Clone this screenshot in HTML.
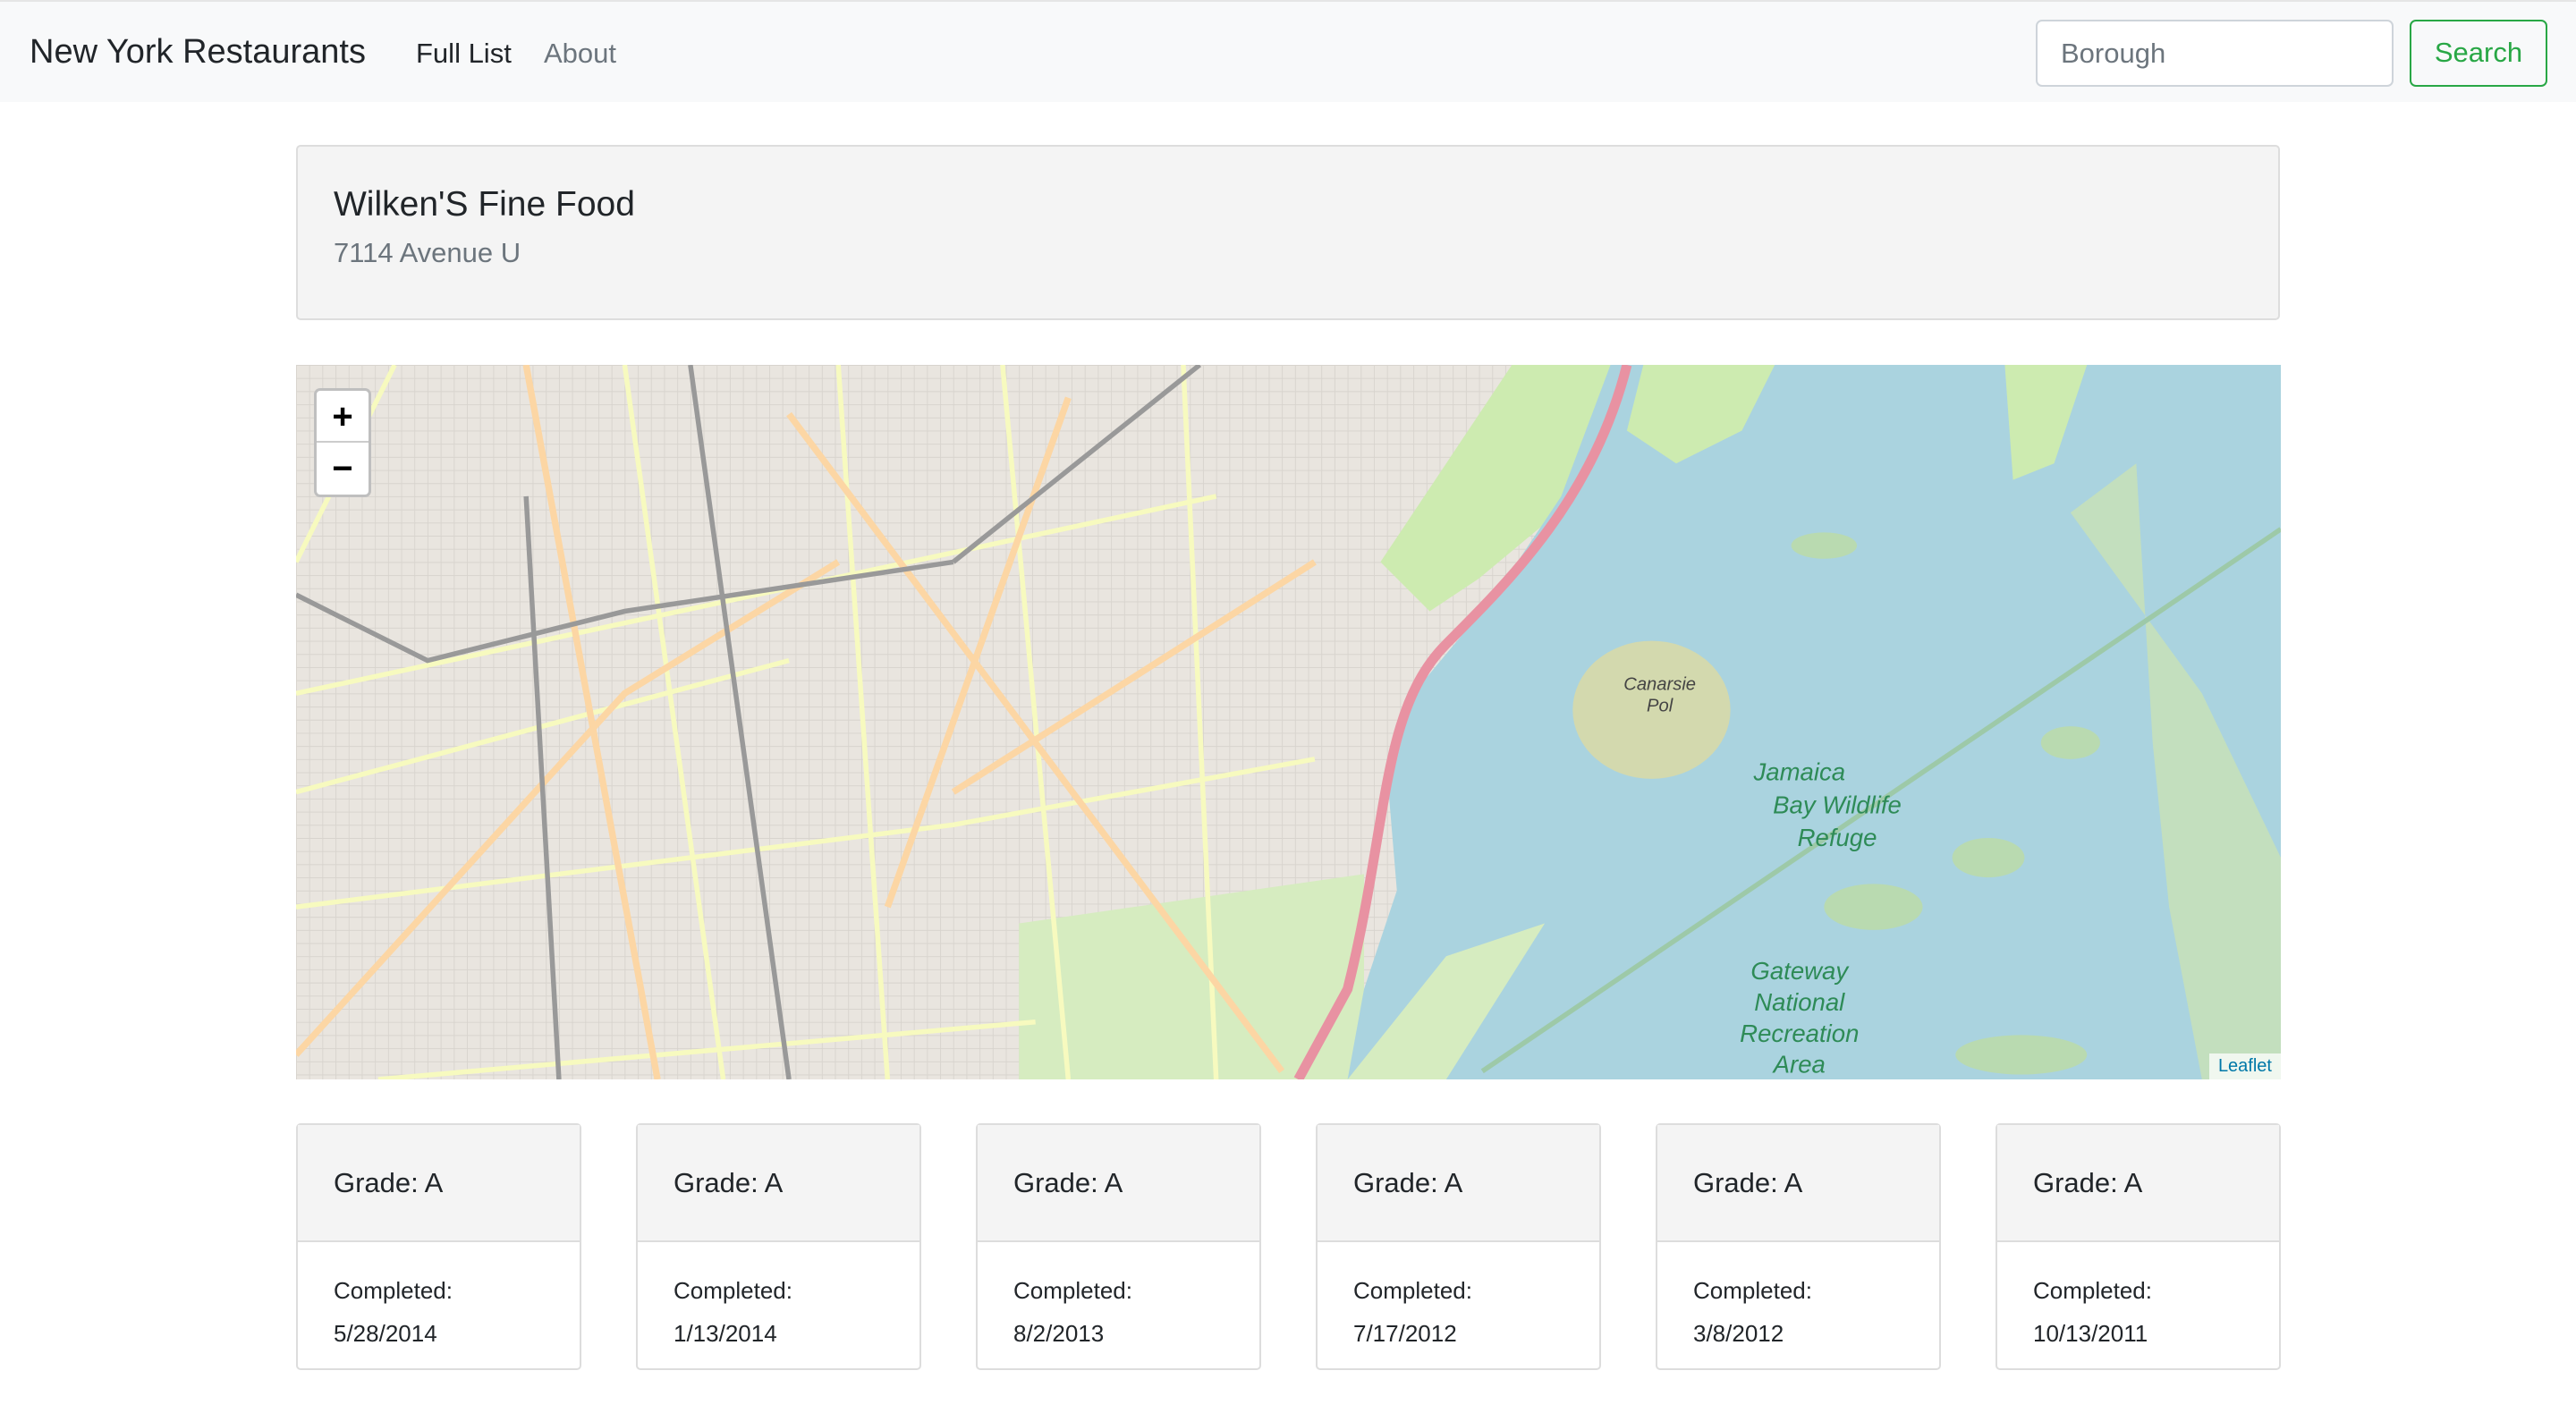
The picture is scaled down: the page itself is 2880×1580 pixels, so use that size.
<!DOCTYPE html>
<html><head><meta charset="utf-8"><style>
*{box-sizing:border-box;margin:0;padding:0}
body{width:2880px;height:1580px;background:#fff;font-family:"Liberation Sans",Arial,sans-serif;color:#212529;position:relative;overflow:hidden}
.nav{position:absolute;left:0;top:0;width:2880px;height:114px;background:#f8f9fa;border-top:2px solid #e5e5e5}
.brand{position:absolute;left:33px;top:35px;font-size:38px;color:#212529}
.l1{position:absolute;left:465px;top:40px;font-size:31px;color:#212529}
.l2{position:absolute;left:608px;top:40px;font-size:31px;color:#6c757d}
.inp{position:absolute;left:2276px;top:20px;width:400px;height:75px;border:2px solid #ced4da;border-radius:7px;background:#fff;font-size:31px;color:#6c757d;padding:18px 26px}
.btn{position:absolute;left:2694px;top:20px;width:154px;height:75px;border:2px solid #28a745;border-radius:7px;color:#28a745;font-size:31px;text-align:center;line-height:69px}
.card{position:absolute;left:331px;top:162px;width:2218px;height:196px;background:#f4f4f4;border:2px solid #ddd;border-radius:5px}
.card h1{position:absolute;left:40px;top:43px;font-size:39px;font-weight:normal}
.card p{position:absolute;left:40px;top:101px;font-size:31px;color:#6c757d}
.map{position:absolute;left:331px;top:408px;width:2219px;height:799px;overflow:hidden;background:#ece8e1}
.zc{position:absolute;left:20px;top:26px;width:64px;height:122px;background:#fff;border:3px solid rgba(0,0,0,.25);border-radius:7px;font-size:40px;font-weight:bold;text-align:center;color:#000}
.zc div{height:58px;line-height:58px}
.zc div:first-child{border-bottom:2px solid #ccc}
.attr{position:absolute;right:0;bottom:0;background:rgba(255,255,255,.75);font-size:20px;color:#0078a8;padding:3px 10px}
.g{position:absolute;top:1256px;width:319px;height:276px;border:2px solid #ddd;border-radius:5px;background:#fff}
.g .h{height:131px;background:#f4f4f4;border-bottom:2px solid #ddd;font-size:31px;padding:47px 0 0 40px}
.g .b{font-size:26px;padding:30px 0 0 40px;line-height:48px}
</style></head><body>
<div class="nav"><div class="brand">New York Restaurants</div><div class="l1">Full List</div><div class="l2">About</div>
<div class="inp">Borough</div><div class="btn">Search</div></div>
<div class="card"><h1>Wilken'S Fine Food</h1><p>7114 Avenue U</p></div>
<div class="map">
<svg width="2219" height="799" viewBox="0 0 1208 435" preserveAspectRatio="none">
<defs><pattern id="st" width="8" height="8" patternUnits="userSpaceOnUse"><rect width="8" height="8" fill="#e9e5df"/><path d="M0 0H8M0 0V8" stroke="#d8d4ce" stroke-width="1"/></pattern></defs>
<rect width="1208" height="435" fill="url(#st)"/>
<path d="M440 340 L650 310 L650 435 L440 435Z" fill="#d6ecc0"/>
<path d="M740 0 L800 0 L780 80 L720 130 L690 150 L660 120 L700 60Z" fill="#cdebb0"/>
<path d="M800 0 L1208 0 L1208 435 L640 435 L650 380 L670 320 L665 260 L680 200 L730 140 L770 80Z" fill="#aad3df"/>
<path d="M820 0 L900 0 L880 40 L840 60 L810 40Z" fill="#cdebb0"/>
<path d="M1040 0 L1090 0 L1070 60 L1045 70Z" fill="#cdebb0"/>
<path d="M1080 90 L1120 60 L1130 230 L1140 330 L1160 435 L1208 435 L1208 300 L1160 200 Z" fill="#c3dfbe"/>
<ellipse cx="825" cy="210" rx="48" ry="42" fill="#d3d9ae"/>
<g fill="#b9dab0"><ellipse cx="960" cy="330" rx="30" ry="14"/><ellipse cx="1030" cy="300" rx="22" ry="12"/><ellipse cx="1050" cy="420" rx="40" ry="12"/><ellipse cx="1080" cy="230" rx="18" ry="10"/><ellipse cx="930" cy="110" rx="20" ry="8"/></g>
<path d="M640 435 L700 360 L760 340 L700 435Z" fill="#d6ecc0"/>
<path d="M810 0 C790 80 740 130 700 170 C660 210 665 280 640 380 L610 435" stroke="#e892a2" stroke-width="6" fill="none"/>
<g stroke="#f7fabf" stroke-width="3" fill="none">
<path d="M0 200 L560 80"/><path d="M0 330 L400 280 L620 240"/><path d="M200 0 L260 435"/><path d="M330 0 L360 435"/><path d="M430 0 L470 435"/><path d="M60 0 L0 120"/><path d="M540 0 L560 435"/><path d="M0 260 L300 180"/><path d="M50 435 L450 400"/></g>
<g stroke="#fcd6a4" stroke-width="4" fill="none"><path d="M140 0 L220 435"/><path d="M300 30 L600 430"/><path d="M0 420 L200 200 L330 120"/><path d="M400 260 L620 120"/><path d="M470 20 L360 330"/></g>
<g stroke="#999" stroke-width="3" fill="none"><path d="M0 140 L80 180 L200 150 L400 120"/><path d="M400 120 L550 0"/><path d="M240 0 L300 435"/><path d="M140 80 L160 435"/></g>
<path d="M722 430 L1208 100" stroke="#9dc9a8" stroke-width="3" fill="none"/>
<g font-family="Liberation Sans" font-style="italic" fill="#2e8b57" text-anchor="middle" font-size="15">
<text x="915" y="253">Jamaica</text><text x="938" y="273">Bay Wildlife</text><text x="938" y="293">Refuge</text>
<text x="915" y="374">Gateway</text><text x="915" y="393">National</text><text x="915" y="412">Recreation</text><text x="915" y="431">Area</text></g>
<g font-family="Liberation Sans" font-style="italic" fill="#444" text-anchor="middle" font-size="11"><text x="830" y="198">Canarsie</text><text x="830" y="211">Pol</text></g>
</svg>
<div class="zc"><div>+</div><div>−</div></div>
<div class="attr">Leaflet</div>
</div>
<div class="g" style="left:331px"><div class="h">Grade: A</div><div class="b">Completed:<br>5/28/2014</div></div>
<div class="g" style="left:711px"><div class="h">Grade: A</div><div class="b">Completed:<br>1/13/2014</div></div>
<div class="g" style="left:1091px"><div class="h">Grade: A</div><div class="b">Completed:<br>8/2/2013</div></div>
<div class="g" style="left:1471px"><div class="h">Grade: A</div><div class="b">Completed:<br>7/17/2012</div></div>
<div class="g" style="left:1851px"><div class="h">Grade: A</div><div class="b">Completed:<br>3/8/2012</div></div>
<div class="g" style="left:2231px"><div class="h">Grade: A</div><div class="b">Completed:<br>10/13/2011</div></div>
</body></html>
